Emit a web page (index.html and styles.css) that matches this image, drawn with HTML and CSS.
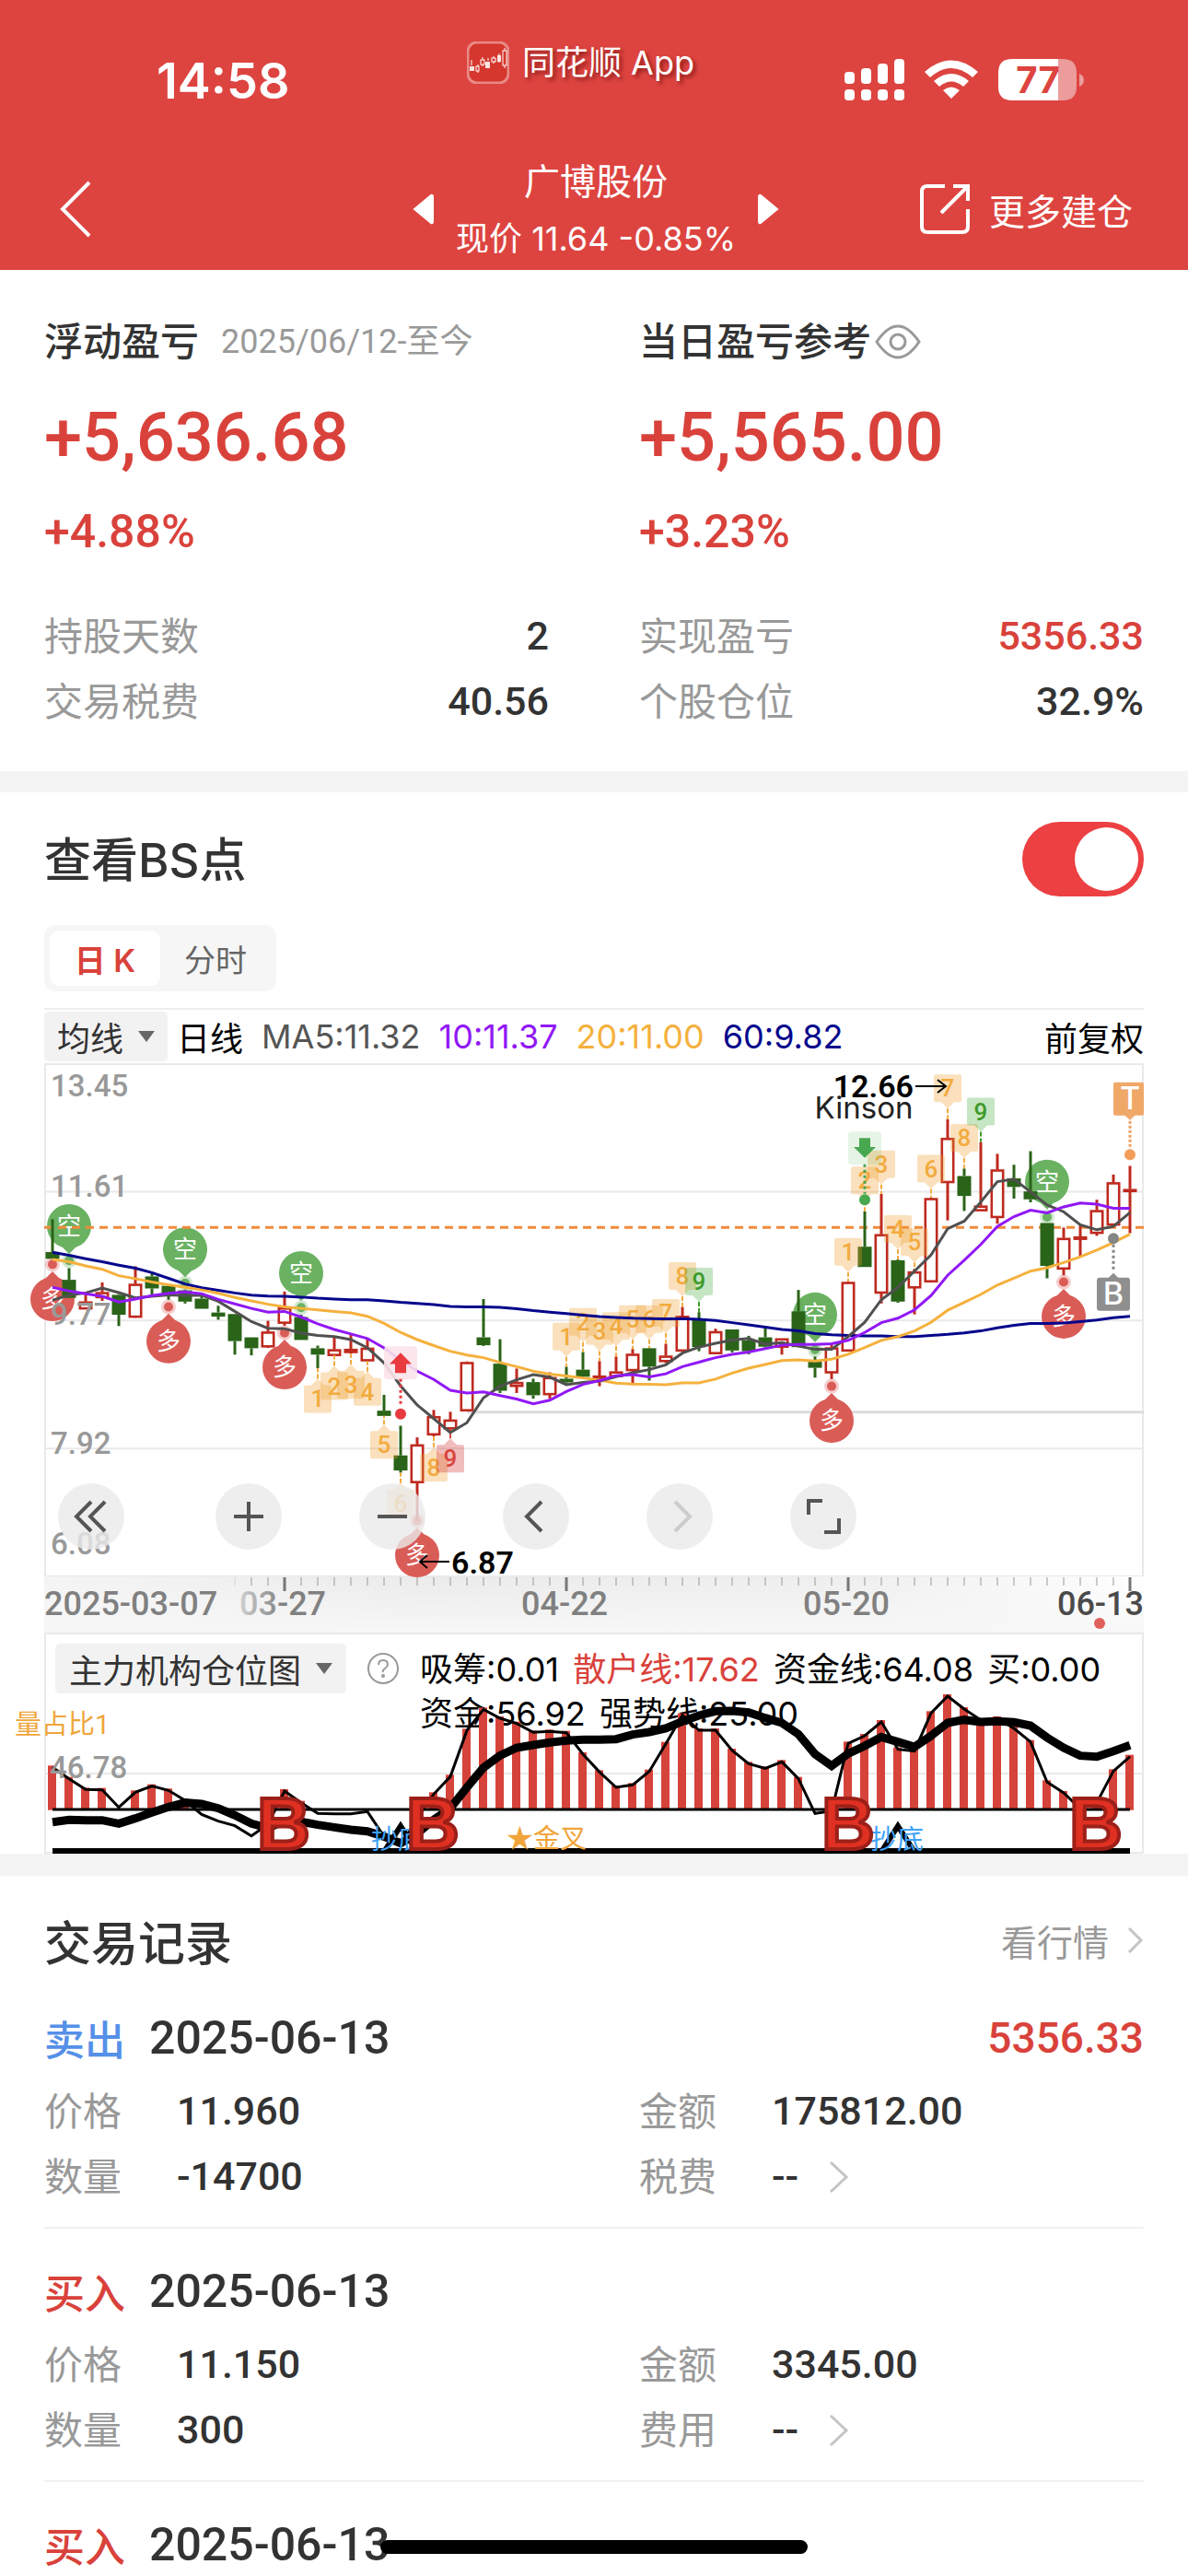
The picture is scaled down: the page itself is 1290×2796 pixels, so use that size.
FILE: index.html
```html
<!DOCTYPE html>
<html lang="zh-CN">

<head>
    <meta charset="UTF-8">
    <meta name="viewport" content="width=device-width, initial-scale=1.0">
    <title>广博股份</title>
    <link rel="stylesheet" href="styles.css">
</head>

<body>
    <header class="header">
        <div class="status">
            <span class="time">14:58</span>
            <div class="app">
                <svg width="46" height="46" viewBox="0 0 46 46">
                    <rect x="1" y="1" width="44" height="44" rx="10" fill="#d5362d" stroke="#e88a85" stroke-width="3" />
                    <path d="M5 26v-6M12 25v9M17 17v10M23 21v-3M29 16v8M35 13v10M41 7v22" stroke="#fff" stroke-width="1" />
                    <g fill="#fbe4e2">
                        <rect x="3" y="27" width="5" height="5" />
                        <rect x="20" y="22" width="5" height="7" />
                        <rect x="33" y="15" width="4" height="7" />
                    </g>
                    <g fill="#d5362d" stroke="#fff" stroke-width="1">
                        <rect x="10" y="27" width="3" height="5" />
                        <rect x="15" y="20" width="4" height="5" />
                        <rect x="27" y="18" width="4" height="4" />
                        <rect x="39" y="10" width="4" height="16" />
                    </g>
                </svg>
                <span>同花顺 App</span>
            </div>
            <div class="signals">
                <svg width="65" height="46" viewBox="0 0 65 46" fill="#fff">
                    <rect x="0" y="14" width="11" height="13" rx="4" />
                    <rect x="18" y="10" width="11" height="17" rx="4" />
                    <rect x="36" y="5" width="11" height="22" rx="4" />
                    <rect x="54" y="0" width="11" height="27" rx="4" />
                    <rect x="0" y="33" width="11" height="12" rx="4" />
                    <rect x="18" y="33" width="11" height="12" rx="4" />
                    <rect x="36" y="33" width="11" height="12" rx="4" />
                    <rect x="54" y="33" width="11" height="12" rx="4" />
                </svg>
                <svg width="58" height="46" viewBox="0 0 58 46" fill="#fff">
                    <path d="M0 14Q29 -11 58 14L52 20Q29 0 6 20Z" />
                    <path d="M10 24Q29 8 48 24L42 30Q29 19 16 30Z" />
                    <path d="M20 34Q29 27 38 34L29 43Z" />
                </svg>
                <svg width="93" height="46" viewBox="0 0 93 46">
                    <path d="M15 0H65V45H15Q0 45 0 30V15Q0 0 15 0Z" fill="#fff" />
                    <path d="M65 0H70Q85 0 85 15V30Q85 45 70 45H65Z" fill="#eb9c9b" />
                    <path d="M88 16Q93 18 93 23T88 30Z" fill="#eb9c9b" />
                    <text x="43" y="37" class="battery-text">77</text>
                </svg>
            </div>
        </div>
        <div class="nav">
            <button class="back" aria-label="返回">
                <svg width="36" height="64" viewBox="0 0 36 64">
                    <path d="M33 3L4 32L33 61" fill="none" stroke="#fff" stroke-width="4" />
                </svg>
            </button>
            <div class="stock">
                <button aria-label="上一只">
                    <svg width="26" height="36" viewBox="0 0 26 36">
                        <path d="M21 3L3 18L21 33Q23 34 23 31V5Q23 2 21 3Z" fill="#fff" stroke="#fff" stroke-width="2" />
                    </svg>
                </button>
                <div class="stock-name">
                    <h1>广博股份</h1>
                    <p>现价 11.64 -0.85%</p>
                </div>
                <button aria-label="下一只">
                    <svg width="26" height="36" viewBox="0 0 26 36">
                        <path d="M5 3L23 18L5 33Q3 34 3 31V5Q3 2 5 3Z" fill="#fff" stroke="#fff" stroke-width="2" />
                    </svg>
                </button>
            </div>
            <button class="more">
                <svg width="56" height="56" viewBox="0 0 56 56" fill="none" stroke="#fff" stroke-width="4">
                    <path d="M28 3H9Q3 3 3 9V47Q3 53 9 53H47Q53 53 53 47V28" />
                    <path d="M37 3H53V19M51 5L24 32" />
                </svg>
                更多建仓
            </button>
        </div>
    </header>

    <section class="summary">
        <div class="col">
            <h2>浮动盈亏 <small>2025/06/12-至今</small></h2>
            <p class="amount">+5,636.68</p>
            <p class="percent">+4.88%</p>
            <dl>
                <div><dt>持股天数</dt><dd>2</dd></div>
                <div><dt>交易税费</dt><dd>40.56</dd></div>
            </dl>
        </div>
        <div class="col">
            <h2>当日盈亏参考
                <button aria-label="隐藏金额">
                    <svg width="50" height="38" viewBox="0 0 50 38" fill="none" stroke="#999" stroke-width="3">
                        <path d="M2 19Q25 -15 48 19Q25 53 2 19Z" />
                        <circle cx="25" cy="19" r="8" />
                    </svg>
                </button>
            </h2>
            <p class="amount">+5,565.00</p>
            <p class="percent">+3.23%</p>
            <dl>
                <div><dt>实现盈亏</dt><dd class="red">5356.33</dd></div>
                <div><dt>个股仓位</dt><dd>32.9%</dd></div>
            </dl>
        </div>
    </section>

    <section class="chart-section">
        <div class="bs-row">
            <label for="bs">查看BS点</label>
            <input type="checkbox" id="bs" class="switch" checked>
        </div>
        <div class="tabs">
            <button class="active">日 K</button>
            <button>分时</button>
        </div>
        <div class="legend">
            <button class="drop">均线 <i class="caret"></i></button>
            <span class="c-black">日线</span>
            <span class="c-ma5">MA5:11.32</span>
            <span class="c-ma10">10:11.37</span>
            <span class="c-ma20">20:11.00</span>
            <span class="c-ma60">60:9.82</span>
            <span class="c-black adjust">前复权</span>
        </div>
        <div class="chart">
            <div class="indicator">
                <button class="drop">主力机构仓位图 <i class="caret"></i></button>
                <svg class="help" width="36" height="36" viewBox="0 0 36 36">
                    <circle cx="18" cy="18" r="16" fill="none" stroke="#999" stroke-width="2" />
                    <path d="M13 14Q13 9 18 9T23 14Q23 16 20 18T18 22" fill="none" stroke="#999" stroke-width="2" />
                    <circle cx="18" cy="26" r="2" fill="#999" />
                </svg>
                <p class="values">
                    <span>吸筹:0.01</span>
                    <span class="red">散户线:17.62</span>
                    <span>资金线:64.08</span>
                    <span>买:0.00</span><br>
                    <span>资金:56.92</span>
                    <span>强势线:25.00</span>
                </p>
            </div>
            <svg id="plot" class="plot" viewBox="0 0 1290 858">
                <defs>
                    <linearGradient id="axisFade" x1="0" x2="1" y1="0" y2="0">
                        <stop offset="0" stop-color="#f4f4f4" />
                        <stop offset=".35" stop-color="#ebebeb" />
                        <stop offset=".75" stop-color="#efefef" />
                        <stop offset="1" stop-color="#fff" />
                    </linearGradient>
                    <linearGradient id="axisDown" x1="0" x2="0" y1="0" y2="1">
                        <stop offset="0" stop-color="#f7f7f7" stop-opacity="0" />
                        <stop offset="1" stop-color="#f7f7f7" />
                    </linearGradient>
                    <linearGradient id="dateFade" x1="0" x2="1" y1="0" y2="0">
                        <stop offset="0" stop-color="#d0d0d0" />
                        <stop offset=".5" stop-color="#808080" />
                    </linearGradient>
                </defs>
            </svg>
            <div class="tools">
                <button aria-label="最早">
                    <svg viewBox="0 0 72 72"><path d="M36 20L20 36L36 52M51 20L35 36L51 52" /></svg>
                </button>
                <button aria-label="放大">
                    <svg viewBox="0 0 72 72"><path d="M36 20V52M20 36H52" /></svg>
                </button>
                <button aria-label="缩小">
                    <svg viewBox="0 0 72 72"><path d="M20 36H52" /></svg>
                </button>
                <button aria-label="左移">
                    <svg viewBox="0 0 72 72"><path d="M42 20L26 36L42 52" /></svg>
                </button>
                <button aria-label="右移" disabled>
                    <svg viewBox="0 0 72 72"><path d="M31 20L47 36L31 52" /></svg>
                </button>
                <button aria-label="全屏">
                    <svg viewBox="0 0 72 72"><path d="M20 34V19H35M37 53H53V38" /></svg>
                </button>
            </div>
        </div>
    </section>

    <section class="records">
        <div class="records-head">
            <h2>交易记录</h2>
            <a href="#">看行情
                <svg width="18" height="30" viewBox="0 0 18 30"><path d="M2 2L15 15L2 28" /></svg>
            </a>
        </div>
        <article class="record">
            <h3><span class="sell">卖出</span> <time>2025-06-13</time> <b>5356.33</b></h3>
            <dl>
                <div><dt>价格</dt><dd>11.960</dd></div>
                <div><dt>金额</dt><dd>175812.00</dd></div>
                <div><dt>数量</dt><dd>-14700</dd></div>
                <div><dt>税费</dt><dd>-- <svg width="24" height="38" viewBox="0 0 24 38"><path d="M3 3L20 19L3 35" /></svg></dd></div>
            </dl>
        </article>
        <article class="record">
            <h3><span class="buy">买入</span> <time>2025-06-13</time></h3>
            <dl>
                <div><dt>价格</dt><dd>11.150</dd></div>
                <div><dt>金额</dt><dd>3345.00</dd></div>
                <div><dt>数量</dt><dd>300</dd></div>
                <div><dt>费用</dt><dd>-- <svg width="24" height="38" viewBox="0 0 24 38"><path d="M3 3L20 19L3 35" /></svg></dd></div>
            </dl>
        </article>
        <article class="record">
            <h3><span class="buy">买入</span> <time>2025-06-13</time></h3>
        </article>
    </section>
    <div class="home-bar"></div>

    <script src="chart.js"></script>
</body>

</html>
```
FILE: chart.js
```js
const plot = document.getElementById('plot');
const RED = '#bf2a1f';
const GREEN = '#2a6418';

// price scale: 58 is the top of the chart, 1423 the bottom
const px = i => 57 + 18 * i;
const py = v => (v - 58) / 2.45;
// lower panel scale
const qy = v => 606 + v / 3;

// [colour, high, body top, body bottom, low]
const candles = [
    ['g', 473, 560, 578, 578], ['g', 603, 634, 682, 682], ['r', 672, 692, 710, 710], ['r', 641, 667, 680, 690],
    ['g', 672, 674, 727, 757], ['r', 598, 645, 732, 735], ['g', 613, 625, 657, 680], ['g', 648, 650, 672, 687],
    ['g', 660, 662, 692, 697], ['g', 675, 684, 711, 711], ['g', 703, 721, 732, 740], ['g', 725, 725, 797, 833],
    ['g', 787, 787, 816, 835], ['r', 743, 772, 811, 815], ['r', 665, 708, 748, 756], ['g', 727, 733, 794, 794],
    ['g', 809, 816, 833, 869], ['r', 786, 819, 834, 834], ['r', 776, 818, 826, 830], ['r', 790, 815, 848, 850],
    ['g', 940, 982, 996, 996], ['g', 1022, 1101, 1141, 1147], ['r', 1053, 1072, 1172, 1275], ['r', 980, 997, 1045, 1050],
    ['r', 985, 1006, 1029, 1032], ['r', 851, 853, 981, 981], ['g', 685, 787, 808, 810], ['g', 792, 857, 929, 935],
    ['r', 870, 906, 916, 935], ['g', 897, 906, 941, 950], ['r', 880, 893, 938, 950], ['g', 865, 897, 907, 910],
    ['g', 826, 873, 892, 897], ['r', 850, 889, 895, 917], ['r', 838, 878, 890, 893], ['r', 818, 831, 874, 914],
    ['g', 815, 816, 865, 902], ['r', 804, 836, 850, 855], ['r', 706, 730, 822, 825], ['g', 720, 741, 813, 824],
    ['r', 764, 771, 829, 832], ['g', 766, 766, 822, 827], ['g', 783, 795, 824, 832], ['g', 763, 787, 812, 815],
    ['r', 790, 790, 812, 833], ['g', 661, 718, 813, 813], ['g', 838, 852, 868, 894], ['r', 806, 814, 880, 898],
    ['r', 638, 640, 822, 822], ['g', 452, 546, 600, 600], ['r', 406, 513, 668, 697], ['g', 580, 582, 692, 695],
    ['r', 605, 612, 654, 726], ['r', 415, 417, 638, 638], ['r', 207, 257, 374, 476], ['g', 338, 358, 411, 451],
    ['r', 268, 437, 449, 449], ['r', 299, 341, 467, 485], ['g', 328, 364, 387, 418], ['g', 292, 399, 420, 428],
    ['g', 483, 483, 597, 630], ['r', 495, 523, 604, 622], ['r', 490, 519, 525, 570], ['r', 421, 449, 509, 517],
    ['r', 354, 375, 487, 490], ['r', 331, 393, 398, 510]
];

const ma5 = [688, 675, 669, 656, 668, 682, 678, 674, 676, 675, 691, 718, 745, 763, 764, 776, 782, 785, 793, 815, 855, 916,
    967, 1003, 1040, 1014, 948, 917, 900, 886, 893, 913, 907, 903, 892, 881, 873, 860, 829, 813, 803, 794, 790, 805, 801, 810,
    819, 819, 785, 747, 687, 654, 611, 568, 498, 478, 427, 373, 366, 400, 435, 453, 488, 501, 492, 455];
const ma10 = [654, 664, 671, 678, 693, 685, 676, 670, 666, 671, 686, 698, 710, 720, 718, 733, 751, 766, 778, 790, 815, 848,
    877, 899, 928, 935, 932, 942, 951, 964, 954, 931, 912, 902, 889, 886, 892, 884, 865, 853, 841, 832, 826, 817, 808, 806,
    806, 804, 795, 774, 748, 736, 714, 676, 622, 582, 540, 492, 466, 449, 456, 440, 430, 433, 444, 444];
const ma20 = [580, 586, 597, 606, 623, 631, 640, 647, 654, 661, 670, 681, 690, 699, 706, 710, 714, 718, 722, 731, 750, 774,
    793, 809, 824, 834, 841, 854, 865, 877, 885, 890, 895, 901, 909, 911, 912, 913, 908, 908, 898, 882, 869, 859, 849, 847,
    850, 845, 832, 814, 795, 785, 770, 747, 715, 694, 673, 648, 630, 611, 602, 588, 573, 555, 535, 513];
const ma60 = [561, 569, 578, 586, 595, 603, 615, 630, 645, 655, 662, 669, 675, 677, 678, 680, 683, 685, 687, 687, 690, 694,
    697, 700, 705, 706, 706, 707, 711, 716, 720, 724, 728, 732, 734, 736, 737, 738, 737, 739, 742, 748, 754, 760, 766, 770,
    777, 780, 782, 783, 783, 785, 785, 782, 779, 775, 770, 762, 755, 750, 750, 749, 745, 741, 735, 731];

// [index, label, box top, side of the candle, colour]
const counts = [
    [16, 1, 914, 'below'], [17, 2, 880, 'below'], [18, 3, 876, 'below'], [19, 4, 895, 'below'], [20, 5, 1036, 'below'],
    [21, 6, 1192, 'below'], [23, 8, 1097, 'below'], [24, 9, 1073, 'below', 'r'],
    [31, 1, 748, 'above'], [32, 2, 709, 'above'], [33, 3, 733, 'above'], [34, 4, 720, 'above'], [35, 5, 702, 'above'],
    [36, 6, 702, 'above'], [37, 7, 685, 'above'], [38, 8, 587, 'above'], [39, 9, 602, 'above', 'g'],
    [48, 1, 523, 'above'], [49, 2, 333, 'above'], [50, 3, 290, 'above'], [51, 4, 462, 'above'], [52, 5, 497, 'above'],
    [53, 6, 302, 'above'], [54, 7, 88, 'above'], [55, 8, 220, 'above'], [56, 9, 150, 'above', 'g']
];
const countColors = { o: ['#f0a030', '#f2ab3f'], r: ['#cf2f2f', '#d9443c'], g: ['#4fae43', '#3f9a28'] };

// lower panel: thin line (with its bars) and thick line
const thin = [475, 512, 547, 548, 605, 556, 536, 550, 583, 628, 650, 665, 698, 660, 552, 590, 625, 626, 626, 619, 700, 730,
    640, 562, 505, 355, 286, 315, 332, 361, 358, 362, 432, 490, 540, 532, 488, 398, 305, 354, 354, 420, 463, 478, 457, 512,
    625, 617, 397, 372, 327, 416, 422, 298, 243, 285, 321, 315, 348, 392, 523, 558, 610, 590, 487, 440];
const thick = [653, 646, 647, 647, 658, 641, 622, 604, 590, 594, 608, 631, 658, 672, 650, 652, 662, 670, 678, 683, 700, 722,
    690, 645, 608, 540, 476, 436, 411, 402, 394, 388, 385, 385, 383, 368, 360, 348, 325, 306, 292, 291, 296, 314, 330, 367,
    432, 470, 430, 405, 376, 392, 408, 372, 330, 320, 327, 325, 328, 339, 378, 411, 437, 440, 422, 403];

let out = '';
const add = s => { out += s; };
const rect = (x, y, w, h, attrs) => add(`<rect x="${x}" y="${y}" width="${w}" height="${h}" ${attrs}/>`);
const line = (x1, y1, x2, y2, attrs) => add(`<line x1="${x1}" y1="${y1}" x2="${x2}" y2="${y2}" ${attrs}/>`);
const text = (x, y, s, attrs) => add(`<text x="${x}" y="${y}" ${attrs}>${s}</text>`);
const poly = (values, scale, attrs) =>
    add(`<polyline fill="none" points="${values.map((v, i) => `${px(i)},${scale(v)}`).join(' ')}" ${attrs}/>`);

function frame() {
    rect(49, 1, 1192, 556, 'fill="none" stroke="#e9e9e9" stroke-width="2"');
    [400, 742, 1083].forEach(v => line(48, py(v), 1242, py(v), 'stroke="#e9e9e9" stroke-width="2"'));
    line(507, py(986), 1242, py(986), 'stroke="#dadada" stroke-width="3"');
    rect(48, 557, 1194, 61, 'fill="url(#axisFade)"');
    rect(48, 557, 1194, 61, 'fill="url(#axisDown)"');
    rect(49, 619, 1192, 238, 'fill="none" stroke="#e9e9e9" stroke-width="2"');
    line(48, 771, 1242, 771, 'stroke="#e9e9e9" stroke-width="2"');
}

// round marker with a dot between it and the candle
function bubble(i, tip, dot, kind) {
    const x = px(i), y = py(tip), d = kind === 'short' ? -1 : 1;
    const color = kind === 'short' ? '#6ab262' : '#da5c57';
    add(`<circle cx="${x}" cy="${py(dot)}" r="8" fill="${color}" opacity=".3"/>`);
    add(`<circle cx="${x}" cy="${py(dot)}" r="5" fill="${color}"/>`);
    add(`<path d="M${x} ${y}L${x - 10} ${y + 10 * d}H${x + 10}Z" fill="${color}"/>`);
    add(`<circle cx="${x}" cy="${y + 30 * d}" r="24" fill="${color}"/>`);
    text(x, y + 30 * d + 9, kind === 'short' ? '空' : '多', 'class="bubble-text"');
}

function count([i, label, top, side, c = 'o']) {
    const x = px(i), y = py(top), [fill, ink] = countColors[c];
    const tip = side === 'above' ? y + 37 : y - 7;
    const base = side === 'above' ? y + 30 : y;
    const end = side === 'above' ? py(candles[i][1]) : py(candles[i][4]);
    line(x, tip, x, end, `stroke="${ink}" stroke-width="2" stroke-dasharray="5 2"`);
    rect(x - 15, y, 30, 30, `rx="2" fill="${fill}" opacity=".32"`);
    add(`<path d="M${x - 7} ${base}L${x} ${tip}L${x + 7} ${base}Z" fill="${fill}" opacity=".32"/>`);
    text(x, y + 24, label, `class="count-text" fill="${ink}"`);
}

function candle([c, high, top, bottom, low], i) {
    const x = px(i), color = c === 'r' ? RED : GREEN;
    line(x, py(high), x, py(top), `stroke="${color}" stroke-width="3"`);
    line(x, py(bottom), x, py(low), `stroke="${color}" stroke-width="3"`);
    if (c === 'r') {
        rect(x - 6.2, py(top) + 1, 12.4, Math.max(py(bottom) - py(top) - 1, 1), `fill="#fff" stroke="${color}" stroke-width="2.6"`);
    } else {
        rect(x - 7.5, py(top), 15, py(bottom) - py(top), `fill="${color}"`);
    }
}

function axis() {
    for (let i = 11; i < 66; i++) {
        const major = i === 14 || i === 31 || i === 48 || i === 65;
        line(px(i), 558, px(i), major ? 573 : 567, `stroke="${major ? '#777' : '#999'}" stroke-width="${major ? 3 : 1}" opacity="${i === 11 ? .3 : 1}"`);
    }
    text(48, 599, '2025-03-07', 'class="date"');
    text(260, 599, '03-27', 'class="date" fill="url(#dateFade)"');
    text(566, 599, '04-22', 'class="date"');
    text(872, 599, '05-20', 'class="date"');
    text(1242, 599, '06-13', 'class="date last"');
    add('<circle cx="1194" cy="608" r="6" fill="#e0605c"/>');
}

function signals() {
    // buy arrow
    let x = px(21);
    rect(x - 18, py(811), 36, 36, 'rx="4" fill="#fbe3ea" opacity=".9"');
    add(`<path d="M${x} ${py(828)}L${x + 12} ${py(858)}H${x + 6}V${py(882)}H${x - 6}V${py(858)}H${x - 12}Z" fill="#e83b3f"/>`);
    line(x, py(898), x, py(966), 'stroke="#e83b3f" stroke-width="3" stroke-dasharray="3 3"');
    add(`<circle cx="${x}" cy="${py(991)}" r="6" fill="#e83b3f"/>`);
    // sell arrow
    x = px(49);
    rect(x - 18, py(240), 36, 36, 'rx="4" fill="#4caf50" opacity=".14"');
    add(`<path d="M${x} ${py(310)}L${x + 12} ${py(281)}H${x + 6}V${py(257)}H${x - 6}V${py(281)}H${x - 12}Z" fill="#48a850"/>`);
    line(x, py(327), x, py(405), 'stroke="#48a850" stroke-width="3" stroke-dasharray="3 3"');
    add(`<circle cx="${x}" cy="${py(421)}" r="6" fill="#48a850"/>`);
    // T and B labels
    x = px(65);
    rect(x - 18, py(109), 33, 36, 'rx="2" fill="#f0a868"');
    add(`<path d="M${x - 6} ${py(196)}L${x} ${py(209)}L${x + 6} ${py(196)}Z" fill="#f0a868"/>`);
    line(x, py(212), x, py(286), 'stroke="#f0a060" stroke-width="3" stroke-dasharray="3 2"');
    add(`<circle cx="${x}" cy="${py(301)}" r="6" fill="#f29d58"/>`);
    text(x, py(181), 'T', 'class="tag-text"');
    x = px(64);
    add(`<circle cx="${x}" cy="${py(524)}" r="6" fill="#858585"/>`);
    line(x, py(540), x, py(606), 'stroke="#858585" stroke-width="3" stroke-dasharray="3 3"');
    add(`<path d="M${x - 6} ${py(630)}L${x} ${py(616)}L${x + 6} ${py(630)}Z" fill="#8f8f8f"/>`);
    rect(x - 18, py(628), 36, 36, 'rx="3" fill="#8f8f8f"');
    text(x, py(700), 'B', 'class="tag-text"');
}

function extremes() {
    text(992, 37, '12.66', 'class="extreme" text-anchor="end"');
    add('<path d="M994 25H1027M1018 18L1027 25L1018 32" fill="none" stroke="#000" stroke-width="2"/>');
    text(938, 60, 'Kinson', 'class="kinson"');
    text(490, 554, '6.87', 'class="extreme"');
    add('<path d="M488 541H456M464 534L456 541L464 548" fill="none" stroke="#000" stroke-width="2"/>');
}

function lowerPanel() {
    thin.forEach((v, i) => {
        if (v < 605) rect(px(i) - 5, qy(v - 6), 9, qy(614) - qy(v - 6), 'fill="#d6433a"');
    });
    line(57, 810, 1227, 810, 'stroke="#000" stroke-width="3"');
    poly(thin, qy, 'stroke="#000" stroke-width="3"');
    poly(thick, qy, 'stroke="#000" stroke-width="9"');
    line(57, 855, 1227, 855, 'stroke="#000" stroke-width="6"');
    [21, 51].forEach(i => add(`<path d="M${px(i - 1)} 856L${px(i)} 828L${px(i + 1)} 856" fill="none" stroke="#000" stroke-width="6"/>`));
    text(403, 853, '抄底', 'class="bottom-text"');
    text(945, 853, '抄底', 'class="bottom-text"');
    text(550, 852, '★金叉', 'class="cross-text"');
    text(16, 728, '量占比1', 'class="cross-text"');
    text(54, 776, '46.78', 'class="price"');
    [282, 444, 895, 1164].forEach(x => text(x - 3, 853, 'B', 'class="big-b"'));
}

frame();
bubble(0, 612, 593); bubble(7, 724, 706); bubble(14, 793, 775);
bubble(22, 1293, 1275); bubble(47, 935, 917); bubble(61, 658, 640);
bubble(1, 565, 583, 'short'); bubble(8, 627, 643, 'short'); bubble(15, 690, 708, 'short');
bubble(46, 800, 820, 'short'); bubble(60, 447, 467, 'short');
line(48, py(495), 1242, py(495), 'stroke="#f08a3c" stroke-width="3" stroke-dasharray="9 6"');
candles.forEach(candle);
counts.forEach(count);
poly(ma60, py, 'stroke="#06068c" stroke-width="3"');
poly(ma20, py, 'stroke="#f5b13d" stroke-width="3"');
poly(ma5, py, 'stroke="#505050" stroke-width="3"');
poly(ma10, py, 'stroke="#9118f5" stroke-width="3"');
[['13.45', 36], ['11.61', 145], ['9.77', 284], ['7.92', 424], ['6.08', 533]].forEach(([s, y]) => text(55, y, s, 'class="price"'));
signals();
axis();
extremes();
lowerPanel();
plot.innerHTML += out;
```
FILE: styles.css
```css
* {
    box-sizing: border-box;
}

body {
    margin: 0;
    font-family: Inter, "Noto Sans CJK SC", sans-serif;
    color: #333;
    background-color: #fff;
}

h1,
h2,
h3,
p,
dl,
dd {
    margin: 0;
    font-weight: 400;
}

button {
    padding: 0;
    border: none;
    background: none;
    color: inherit;
    font: inherit;
    cursor: pointer;
}

svg {
    display: block;
    flex-shrink: 0;
}

.red {
    color: #d9423b;
}

.header {
    color: #fff;
    background-color: #dd4440;
}

.status {
    display: grid;
    grid-template-columns: 1fr auto 1fr;
    align-items: start;
    height: 160px;
    padding: 45px 113px 0 84px;
}

.time {
    padding: 11px 0 0 86px;
    font-size: 54px;
    font-weight: 600;
    line-height: 64px;
}

.app {
    display: flex;
    align-items: center;
    gap: 14px;
    font-size: 36px;
    line-height: 46px;
    text-shadow: 3px 3px 4px rgba(90, 0, 0, 0.6);
}

.signals {
    display: flex;
    justify-content: flex-end;
    gap: 22px;
    padding-top: 19px;
}

.battery-text {
    font-size: 40px;
    font-weight: 700;
    text-anchor: middle;
    fill: #dd4440;
}

.nav {
    display: grid;
    grid-template-columns: 1fr auto 1fr;
    align-items: center;
    height: 133px;
    padding: 0 60px 0 64px;
}

.back {
    justify-self: start;
}

.stock {
    display: flex;
    align-items: center;
    gap: 22px;
}

.stock-name {
    text-align: center;
}

.stock-name h1 {
    font-size: 39px;
    line-height: 64px;
}

.stock-name p {
    font-size: 36px;
    line-height: 60px;
}

.more {
    display: flex;
    justify-self: end;
    align-items: center;
    gap: 20px;
    font-size: 39px;
}

.summary {
    display: grid;
    grid-template-columns: 1fr 1fr;
    gap: 98px;
    padding: 50px 48px 40px;
}

.col h2 {
    display: flex;
    align-items: center;
    gap: 24px;
    font-size: 42px;
    font-weight: 500;
    line-height: 56px;
}

.col:last-child h2 {
    gap: 4px;
}

.col small {
    color: #999;
    font-family: Roboto, "Noto Sans CJK SC", sans-serif;
    font-size: 36px;
    font-weight: 400;
}

.amount {
    margin-top: 24px;
    color: #d9423b;
    font-family: Roboto, sans-serif;
    font-size: 74px;
    font-weight: 500;
    line-height: 104px;
}

.percent {
    margin-top: 20px;
    color: #d9423b;
    font-family: Roboto, sans-serif;
    font-size: 50px;
    font-weight: 500;
    line-height: 60px;
}

.col dl {
    margin-top: 48px;
}

.col dl div {
    display: flex;
    justify-content: space-between;
    font-size: 42px;
    line-height: 71px;
}

dt {
    color: #999;
}

dd {
    font-family: Roboto, sans-serif;
    font-size: 43px;
    font-weight: 500;
}

.chart-section {
    padding-top: 32px;
    border-top: 23px solid #f4f4f4;
}

.bs-row {
    display: flex;
    justify-content: space-between;
    align-items: center;
    margin: 0 48px;
    font-size: 51px;
    font-weight: 500;
}

.bs-row label {
    padding-bottom: 6px;
}

.switch {
    width: 132px;
    height: 81px;
    margin: 0;
    border-radius: 41px;
    background-color: #ddd;
    appearance: none;
    cursor: pointer;
}

.switch::before {
    content: "";
    display: block;
    width: 69px;
    height: 69px;
    margin: 6px;
    border-radius: 50%;
    background-color: #fff;
}

.switch:checked {
    background-color: #ec4042;
}

.switch:checked::before {
    margin-left: 57px;
}

.tabs {
    display: inline-flex;
    margin: 31px 48px 18px;
    padding: 6px;
    border-radius: 12px;
    background-color: #f6f6f6;
    vertical-align: top;
}

.tabs button {
    width: 120px;
    height: 60px;
    border-radius: 10px;
    color: #666;
    font-size: 34px;
}

.tabs .active {
    color: #d9423b;
    font-weight: 600;
    background-color: #fff;
}

.legend {
    display: flex;
    align-items: center;
    gap: 20px;
    height: 60px;
    margin: 0 48px;
    border-top: 2px solid #eee;
    font-size: 36px;
    white-space: nowrap;
}

.drop {
    display: flex;
    align-items: center;
    gap: 16px;
    height: 54px;
    padding: 0 14px;
    border-radius: 5px;
    color: #333;
    font-size: 36px;
    background-color: #f2f2f2;
}

.legend .drop {
    margin-right: -10px;
}

.caret {
    border: 9px solid transparent;
    border-top: 12px solid #666;
    border-bottom: none;
}

.c-black {
    color: #000;
}

.c-ma5 {
    color: #555;
}

.c-ma10 {
    color: #9118f5;
}

.c-ma20 {
    color: #f5b13d;
}

.c-ma60 {
    color: #06068c;
}

.adjust {
    margin-left: auto;
}

.chart {
    position: relative;
}

.plot {
    position: relative;
    width: 100%;
    height: auto;
    pointer-events: none;
}

.plot text {
    font-family: Roboto, "Noto Sans CJK SC", sans-serif;
}

.plot .price {
    fill: #999;
    font-size: 33px;
    font-weight: 500;
}

.plot .date {
    fill: #808080;
    font-size: 36px;
    font-weight: 500;
}

.plot .date[fill] {
    fill: url(#dateFade);
}

.plot .last {
    fill: #4a4a4a;
    text-anchor: end;
}

.plot .extreme {
    font-family: Roboto, sans-serif;
    font-size: 34px;
    font-weight: 600;
}

.plot .kinson {
    fill: #222;
    font-family: Inter, sans-serif;
    font-size: 33px;
    text-anchor: middle;
}

.plot .bubble-text {
    fill: #fff;
    font-size: 26px;
    text-anchor: middle;
}

.plot .count-text {
    font-size: 26px;
    font-weight: 500;
    text-anchor: middle;
}

.plot .tag-text {
    fill: #fff;
    font-family: Inter, sans-serif;
    font-size: 34px;
    font-weight: 500;
    text-anchor: middle;
}

.plot .bottom-text {
    fill: #3fa2f7;
    font-size: 29px;
}

.plot .cross-text {
    fill: #f0a53a;
    font-size: 29px;
}

.plot .big-b {
    fill: #e03022;
    stroke: #9c2019;
    stroke-width: 4px;
    font-family: "Liberation Sans", sans-serif;
    font-size: 80px;
    font-weight: 700;
}

.indicator {
    position: absolute;
    top: 630px;
    left: 60px;
    right: 48px;
    display: flex;
    align-items: flex-start;
    gap: 22px;
}

.indicator .drop {
    padding: 0 15px;
}

.help {
    margin-top: 9px;
}

.values {
    padding-top: 4px;
    color: #000;
    font-size: 36px;
    line-height: 48px;
    white-space: nowrap;
}

.values span {
    margin-right: 5px;
}

.values .red {
    color: #d9423b;
}

.tools {
    position: absolute;
    top: 456px;
    left: 63px;
    display: flex;
    gap: 84px;
}

.tools button {
    width: 72px;
    height: 72px;
    border-radius: 50%;
    background-color: rgba(234, 234, 234, 0.8);
}

.tools button:first-child {
    margin-right: 15px;
}

.tools path {
    fill: none;
    stroke: #555;
    stroke-width: 4;
}

.tools button:disabled path {
    stroke: #ccc;
}

.records {
    padding: 0 48px;
    border-top: 24px solid #f4f4f4;
}

.records-head {
    display: flex;
    justify-content: space-between;
    align-items: center;
    height: 140px;
}

.records-head h2 {
    font-size: 51px;
    font-weight: 500;
}

.records-head a {
    display: flex;
    align-items: center;
    gap: 20px;
    color: #999;
    font-size: 39px;
    text-decoration: none;
}

.records path {
    fill: none;
    stroke: #c4c4c4;
    stroke-width: 3;
}

.record {
    padding-bottom: 19px;
    border-bottom: 2px solid #f0f0f0;
}

.record + .record {
    padding-top: 32px;
}

.record:last-child {
    padding-bottom: 0;
    border-bottom: none;
}

.record h3 {
    display: flex;
    align-items: center;
    gap: 26px;
    height: 72px;
    font-size: 44px;
    font-weight: 500;
}

.sell {
    color: #5590e8;
}

.buy {
    color: #d9423b;
}

.record time {
    font-family: Roboto, sans-serif;
    font-size: 50px;
    font-weight: 500;
}

.record b {
    margin-left: auto;
    color: #d9423b;
    font-family: Roboto, sans-serif;
    font-size: 46px;
    font-weight: 500;
}

.record dl {
    display: grid;
    grid-template-columns: 1fr 1fr;
    column-gap: 98px;
    padding-top: 8px;
}

.record dl div {
    display: flex;
    font-size: 42px;
    line-height: 71px;
}

.record dt {
    width: 144px;
}

.record dd {
    display: flex;
    align-items: center;
    gap: 32px;
}

/* iOS home indicator */
.home-bar {
    position: fixed;
    bottom: 24px;
    left: 32%;
    right: 32%;
    height: 15px;
    border-radius: 8px;
    background-color: #000;
}
```
